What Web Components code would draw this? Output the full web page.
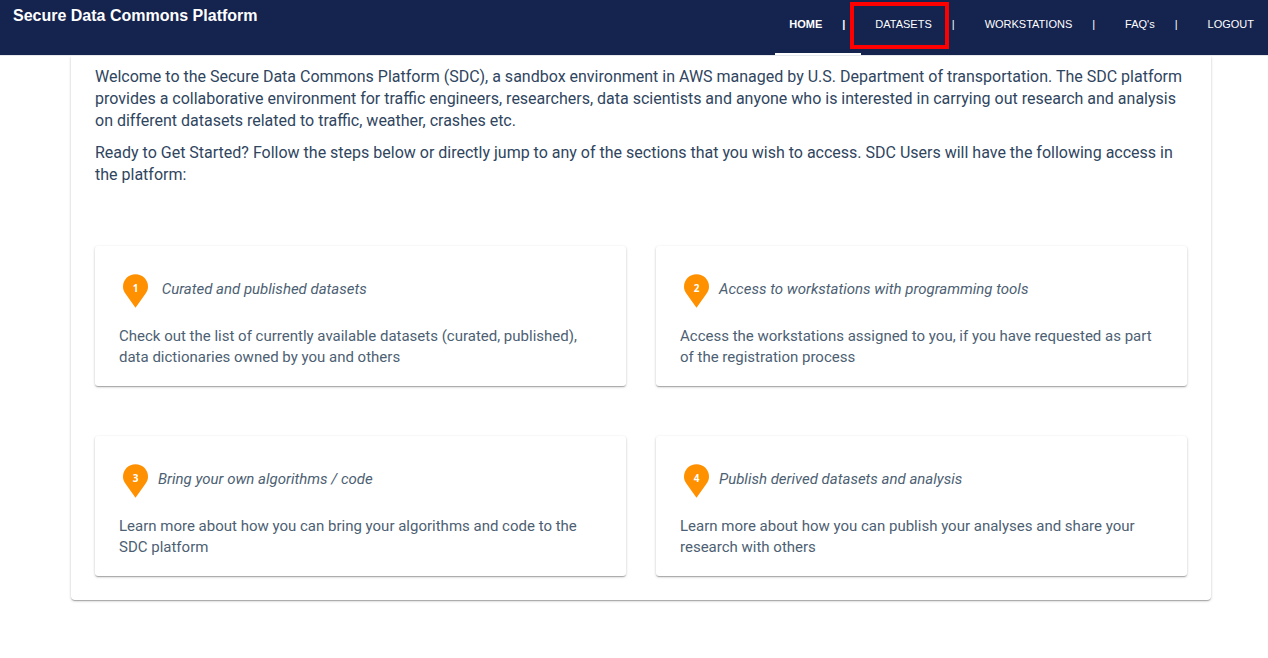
<!DOCTYPE html>
<html lang="en">
<head>
<meta charset="utf-8">
<title>Secure Data Commons Platform</title>
<style>
  body {
    margin: 0; background: #fff; font-family: Roboto, sans-serif;
    --raised: 0 1px 3px rgba(0,0,0,.2), 0 1px 1px rgba(0,0,0,.14), 0 2px 1px -1px rgba(0,0,0,.12);
  }
</style>
</head>
<body>
<sdc-header>
  <span slot="title">Secure Data Commons Platform</span>
  <sdc-tab active separator>HOME</sdc-tab>
  <sdc-tab marked separator>DATASETS</sdc-tab>
  <sdc-tab separator>WORKSTATIONS</sdc-tab>
  <sdc-tab separator>FAQ's</sdc-tab>
  <sdc-tab>LOGOUT</sdc-tab>
</sdc-header>
<sdc-panel>
  <sdc-intro slot="intro">Welcome to the Secure Data Commons Platform (SDC), a sandbox environment in AWS managed by U.S. Department of transportation. The SDC platform provides a collaborative environment for traffic engineers, researchers, data scientists and anyone who is interested in carrying out research and analysis on different datasets related to traffic, weather, crashes etc.</sdc-intro>
  <sdc-intro slot="intro">Ready to Get Started? Follow the steps below or directly jump to any of the sections that you wish to access. SDC Users will have the following access in the platform:</sdc-intro>
  <sdc-card number="1"><span slot="heading">&nbsp;Curated and published datasets</span>Check out the list of currently available datasets (curated, published), data dictionaries owned by you and others</sdc-card>
  <sdc-card number="2"><span slot="heading">Access to workstations with programming tools</span>Access the workstations assigned to you, if you have requested as part of the registration process</sdc-card>
  <sdc-card number="3"><span slot="heading">Bring your own algorithms / code</span>Learn more about how you can bring your algorithms and code to the SDC platform</sdc-card>
  <sdc-card number="4"><span slot="heading">Publish derived datasets and analysis</span>Learn more about how you can publish your analyses and share your research with others</sdc-card>
</sdc-panel>
<script>
class SdcElement extends HTMLElement {
  connectedCallback() {
    if (!this.shadowRoot) this.attachShadow({ mode: 'open' }).innerHTML = this.template();
  }
}

customElements.define('sdc-header', class extends SdcElement {
  template() {
    return `<style>
      :host { display: block; position: sticky; top: 0; z-index: 1; }
      header { display: flex; justify-content: space-between; align-items: flex-start;
        background: #15234f; color: #fff; font-family: "Liberation Sans", Arial, sans-serif;
        border-bottom: 1px solid #e7e8ec; }
      h1 { margin: 0; padding: 7px 13px; font-size: 16px; line-height: 18px; font-weight: bold; }
      nav { display: flex; }
    </style>
    <header><h1><slot name="title"></slot></h1><nav aria-label="Main"><slot></slot></nav></header>`;
  }
});

customElements.define('sdc-tab', class extends SdcElement {
  template() {
    return `<style>
      :host { display: block; position: relative; }
      a { display: flex; gap: 20px; padding: 0 14px 5px; border-bottom: 2px solid transparent;
        color: #fff; text-decoration: none; font-size: 11px; line-height: 48px; white-space: nowrap; }
      :host([separator]) a { padding-right: 16px; }
      :host([active]) a { border-color: #fff; font-weight: bold; }
      .mark { position: absolute; left: -11px; top: 2px; width: 91px; height: 39px;
        border: 4px solid #f00; pointer-events: none; }
    </style>
    <a href="#"><slot></slot>${this.hasAttribute('separator') ? '<span>|</span>' : ''}</a>
    ${this.hasAttribute('marked') ? '<div class="mark"></div>' : ''}`;
  }
});

customElements.define('sdc-panel', class extends SdcElement {
  template() {
    return `<style>
      :host { display: block; margin: 0 57px 57px 71px; padding: 10px 24px 24px;
        border-radius: 0 0 4px 4px; box-shadow: var(--raised); }
      .intro { display: grid; gap: 10px; margin-bottom: 60px; }
      .cards { display: grid; grid-template-columns: 1fr 1fr; gap: 50px 30px; }
    </style>
    <div class="intro"><slot name="intro"></slot></div>
    <div class="cards"><slot></slot></div>`;
  }
});

customElements.define('sdc-intro', class extends SdcElement {
  template() {
    return `<style>
      :host { display: block; }
      p { margin: 0; font-size: 16px; line-height: 22px; color: #2f4560; }
    </style><p><slot></slot></p>`;
  }
});

customElements.define('sdc-card', class extends SdcElement {
  template() {
    return `<style>
      :host { display: block; padding: 24px 24px 18px; border-radius: 3px; color: #4d5f73;
        font-size: 15px; line-height: 21px; box-shadow: var(--raised); }
      h2 { display: flex; align-items: center; gap: 6px; height: 38px; margin: 0 0 18px;
        font-size: 15px; font-weight: normal; font-style: italic; }
      svg { display: block; width: 33px; height: 38px; flex: none; }
      text { font: bold 10px "Open Sans", sans-serif; fill: #fff; text-anchor: middle; }
      p { margin: 0; }
    </style>
    <h2><svg viewBox="0 0 33 38" aria-hidden="true">
      <path d="M16.500 4.300C9.500 4.300 4 9.800 4 16.500C4 19.500 5 21.800 6.700 24.100L16.500 37.800L26.300 24.100C28 21.800 29 19.500 29 16.500C29 9.800 23.500 4.300 16.500 4.300Z" fill="#ff9000"/>
      <text x="16.500" y="22">${this.getAttribute('number')}</text></svg>
      <slot name="heading"></slot></h2>
    <p><slot></slot></p>`;
  }
});
</script>
</body>
</html>
